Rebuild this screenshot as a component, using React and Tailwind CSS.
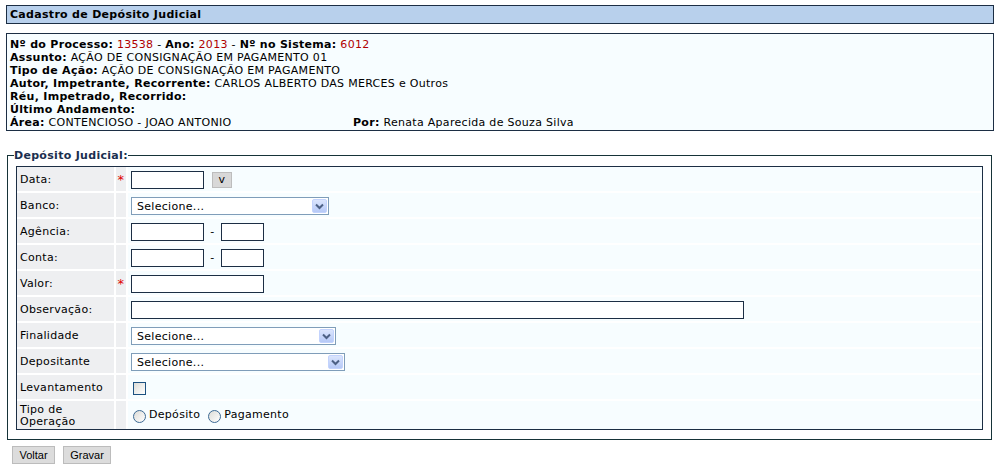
import React from 'react'

const font = { fontFamily: '"DejaVu Sans", Verdana, sans-serif' }

function SelectBox({ width }) {
  return (
    <div className={`flex items-center justify-between h-[18px] bg-white border border-[#7f9db9] pl-[5px] pr-[1px] ${width}`}>
      <span className="text-[11px] leading-none text-black">Selecione...</span>
      <div className="w-[15px] h-[14px] rounded-[2px] bg-gradient-to-b from-[#dbe5fd] to-[#b6c9f7] border border-[#c3d3fd] flex items-center justify-center">
        <svg width="9" height="7" viewBox="0 0 9 7">
          <path d="M1 1.5 L4.5 5 L8 1.5" fill="none" stroke="#4d6185" strokeWidth="2" />
        </svg>
      </div>
    </div>
  )
}

function TextBox({ width }) {
  return <div className={`h-[18px] bg-white border border-[#1c2e44] ${width}`} />
}

function Radio({ label }) {
  return (
    <label className="flex items-center">
      <span className="mt-[3px] w-[13px] h-[13px] rounded-full border border-[#3c6a94] bg-gradient-to-br from-[#dcdcd7] to-white" />
      <span className="ml-[3px] text-[11px]">{label}</span>
    </label>
  )
}

function SplitBox() {
  return (
    <div className="flex items-center">
      <TextBox width="w-[73px]" />
      <span className="w-[17px] text-center text-[11px]">-</span>
      <TextBox width="w-[43px]" />
    </div>
  )
}

const rows = [
  { label: 'Data:', req: true, field: (
    <div className="flex items-center">
      <TextBox width="w-[73px]" />
      <div className="ml-[8px] w-[20px] h-[16px] bg-[#d8d8d8] border border-[#bdbdbd] flex items-center justify-center text-[11px] leading-none pb-[1px]">v</div>
    </div>
  ) },
  { label: 'Banco:', field: <SelectBox width="w-[198px]" /> },
  { label: 'Agência:', field: <SplitBox /> },
  { label: 'Conta:', field: <SplitBox /> },
  { label: 'Valor:', req: true, field: <TextBox width="w-[133px]" /> },
  { label: 'Observação:', field: <TextBox width="w-[613px]" /> },
  { label: 'Finalidade', field: <SelectBox width="w-[205px]" /> },
  { label: 'Depositante', field: <SelectBox width="w-[214px]" /> },
  { label: 'Levantamento', field: (
    <div className="ml-[2px] w-[13px] h-[13px] border border-[#1c5180] bg-gradient-to-br from-[#dcdcd7] to-white" />
  ) },
]

export default function App() {
  return (
    <div className="w-[997px] h-[467px] bg-white pl-[6px] pt-[5px] text-[11px] tracking-[0.3px] text-black" style={font}>
      <div className="w-[988px] h-[19px] bg-[#b8d0ec] border border-[#1c2e44] pl-[3px] flex items-center font-bold leading-none">
        Cadastro de Depósito Judicial
      </div>

      <div className="mt-[9px] w-[988px] bg-[#f7fdff] border border-[#1c2e44] pl-[3px] pt-[4px] pb-[1px] leading-[13px]">
        <div>
          <b>Nº do Processo:</b> <span className="text-[#b00000]">13538</span> - <b>Ano:</b>{' '}
          <span className="text-[#b00000]">2013</span> - <b>Nº no Sistema:</b>{' '}
          <span className="text-[#b00000]">6012</span>
        </div>
        <div><b>Assunto:</b> AÇÃO DE CONSIGNAÇÃO EM PAGAMENTO 01</div>
        <div><b>Tipo de Ação:</b> AÇÃO DE CONSIGNAÇÃO EM PAGAMENTO</div>
        <div><b>Autor, Impetrante, Recorrente:</b> CARLOS ALBERTO DAS MERCES e Outros</div>
        <div><b>Réu, Impetrado, Recorrido:</b></div>
        <div><b>Último Andamento:</b></div>
        <div className="flex">
          <div className="w-[343px]"><b>Área:</b> CONTENCIOSO - JOAO ANTONIO</div>
          <div><b>Por:</b> Renata Aparecida de Souza Silva</div>
        </div>
      </div>

      <fieldset className="mt-[18px] ml-[1px] w-[985px] border border-[#163338] px-[8px] pt-[4px] pb-[9px]">
        <legend className="-ml-[2px] font-bold text-[#1b2f4f] leading-[13px]">Depósito Judicial:</legend>
        <div className="border border-[#1c2e44] bg-white grid grid-cols-[97px_10px_1fr] gap-[2px]">
          {rows.map((r) => (
            <React.Fragment key={r.label}>
              <div className="h-[24px] bg-[#eeeff1] pl-[3px] pt-[3px] flex items-center">{r.label}</div>
              <div className="h-[24px] bg-[#eeeff1] flex items-start justify-center pt-[6px] text-[13px] leading-none text-[#e00000]">
                {r.req ? '*' : ''}
              </div>
              <div className="h-[24px] bg-[#f7fdff] pl-[3px] pt-[2px] flex items-center">{r.field}</div>
            </React.Fragment>
          ))}
          <div className="h-[28px] bg-[#eeeff1] pl-[3px] pt-[1px] flex flex-col justify-center leading-[12px]">
            <span>Tipo de</span>
            <span>Operação</span>
          </div>
          <div className="h-[28px] bg-[#eeeff1]" />
          <div className="h-[28px] bg-[#f7fdff] pl-[5px] flex items-center gap-[8px]">
            <Radio label="Depósito" />
            <Radio label="Pagamento" />
          </div>
        </div>
      </fieldset>

      <div className="mt-[6px] ml-[6px] flex gap-[8px] tracking-normal" style={{ fontFamily: '"Liberation Sans", Tahoma, sans-serif' }}>
        <div className="w-[43px] h-[18px] bg-[#dcdcdc] border border-[#bcbcbc] flex items-center justify-center text-[11px] leading-none">Voltar</div>
        <div className="w-[48px] h-[18px] bg-[#dcdcdc] border border-[#bcbcbc] flex items-center justify-center text-[11px] leading-none">Gravar</div>
      </div>
    </div>
  )
}
